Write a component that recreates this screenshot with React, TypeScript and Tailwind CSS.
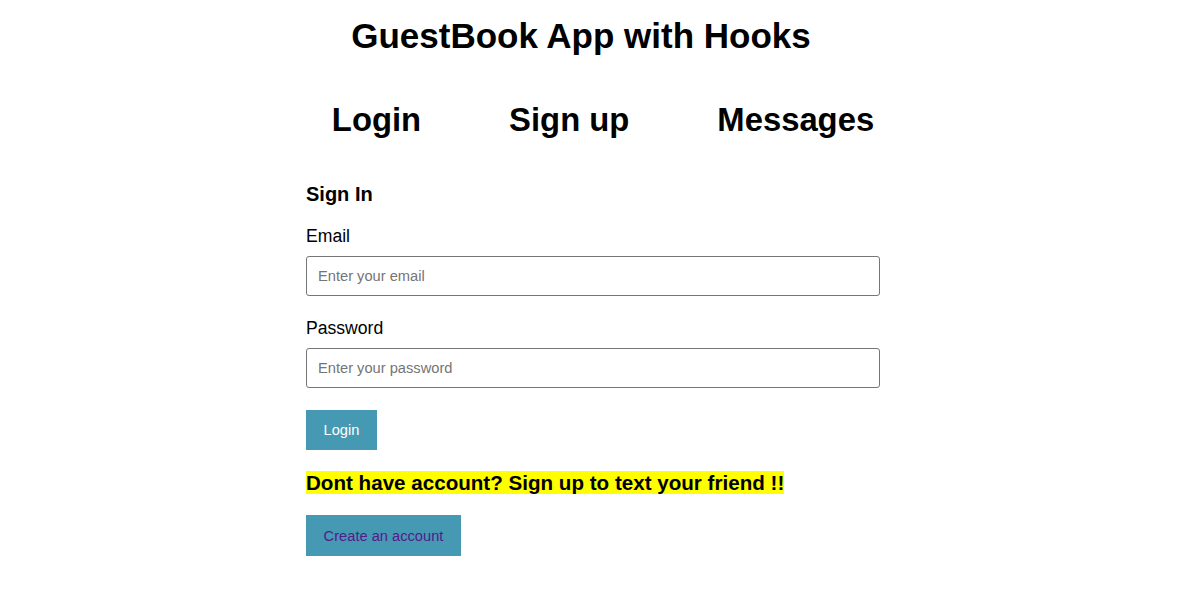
export default function App() {
  return (
    <div className="min-h-screen bg-white text-black">
      <div className="font-['Liberation_Sans',Arial,sans-serif]">
        <h1 className="pt-[16px] pr-[41px] text-center text-[35px] font-bold leading-[40px]">
          GuestBook App with Hooks
        </h1>
        <nav className="mt-[45px] flex justify-center gap-[88px] pl-[3px] text-[32.8px] font-bold leading-[38px]">
          <a href="#">Login</a>
          <a href="#">Sign up</a>
          <a href="#">Messages</a>
        </nav>
        <div className="mx-auto mt-[44px] w-[591px]">
          <form className="w-[574px]" onSubmit={(e) => e.preventDefault()}>
            <h3 className="text-[20px] font-bold leading-[23px]">Sign In</h3>
            <label className="mt-[20px] block text-[17.6px] leading-[20px]">Email</label>
            <input
              type="email"
              placeholder="Enter your email"
              className="mt-[10px] block h-[40px] w-full rounded-[3px] border border-[#767676] px-[11px] text-[14.67px] placeholder:text-[#757575]"
            />
            <label className="mt-[22px] block text-[17.6px] leading-[20px]">Password</label>
            <input
              type="password"
              placeholder="Enter your password"
              className="mt-[10px] block h-[40px] w-full rounded-[3px] border border-[#767676] px-[11px] text-[14.67px] placeholder:text-[#757575]"
            />
            <button
              type="submit"
              className="mt-[22px] block h-[40px] w-[71px] bg-[#4699b3] text-[14.67px] text-white"
            >
              Login
            </button>
            <p className="mt-[21px] text-[20.6px] font-bold leading-[23px]">
              <span className="bg-[#ffff00]">Dont have account? Sign up to text your friend !!</span>
            </p>
            <button
              type="button"
              className="mt-[21px] block h-[41px] w-[155px] bg-[#4699b3] text-[14.67px] text-[#551a8b]"
            >
              Create an account
            </button>
          </form>
        </div>
      </div>
    </div>
  );
}
